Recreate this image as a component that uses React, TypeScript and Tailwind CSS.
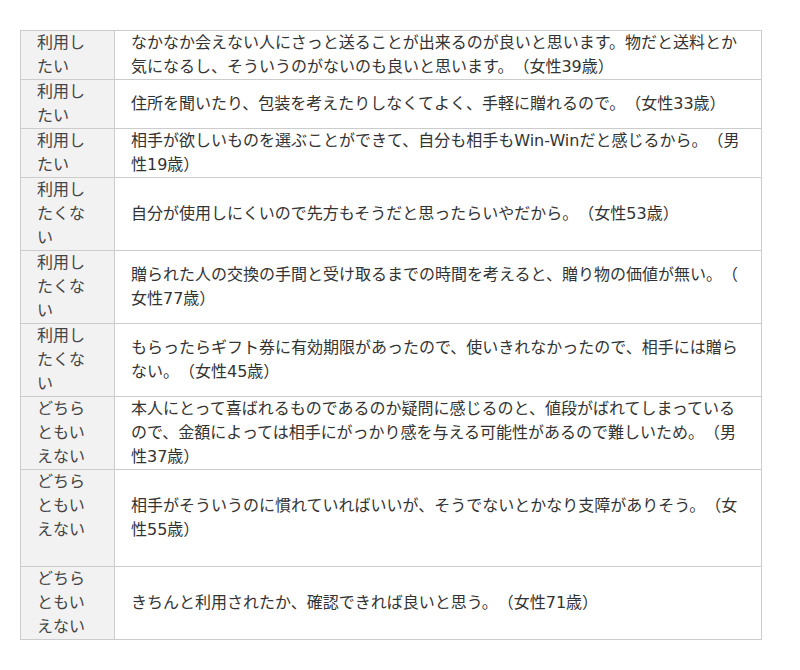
import React from 'react';

type Row = { label: string; text: string; tall?: boolean };

const rows: Row[] = [
  { label: '利用したい', text: 'なかなか会えない人にさっと送ることが出来るのが良いと思います。物だと送料とか気になるし、そういうのがないのも良いと思います。（女性39歳）' },
  { label: '利用したい', text: '住所を聞いたり、包装を考えたりしなくてよく、手軽に贈れるので。（女性33歳）' },
  { label: '利用したい', text: '相手が欲しいものを選ぶことができて、自分も相手もWin-Winだと感じるから。（男性19歳）' },
  { label: '利用したくない', text: '自分が使用しにくいので先方もそうだと思ったらいやだから。（女性53歳）' },
  { label: '利用したくない', text: '贈られた人の交換の手間と受け取るまでの時間を考えると、贈り物の価値が無い。（女性77歳）' },
  { label: '利用したくない', text: 'もらったらギフト券に有効期限があったので、使いきれなかったので、相手には贈らない。（女性45歳）' },
  { label: 'どちらともいえない', text: '本人にとって喜ばれるものであるのか疑問に感じるのと、値段がばれてしまっているので、金額によっては相手にがっかり感を与える可能性があるので難しいため。（男性37歳）' },
  { label: 'どちらともいえない', text: '相手がそういうのに慣れていればいいが、そうでないとかなり支障がありそう。（女性55歳）', tall: true },
  { label: 'どちらともいえない', text: 'きちんと利用されたか、確認できれば良いと思う。（女性71歳）' },
];

export default function App() {
  return (
    <div className="min-h-[670px] bg-white pt-[30px] pl-5 font-['DejaVu_Sans','Noto_Sans_CJK_JP',sans-serif] text-[16px] leading-[24px] text-[#333] [text-spacing-trim:space-all] [line-break:anywhere]">
      <table className="w-[742px] border-collapse">
        <tbody>
          {rows.map((r, i) => (
            <tr key={i}>
              <td
                className={`w-[94px] border border-[#ccc] bg-[#f2f2f2] pl-4 pr-4 align-top text-[#444] ${r.tall ? 'h-[97px]' : ''}`}
              >
                {r.label}
              </td>
              <td className="border border-[#ccc] px-4 align-middle">{r.text}</td>
            </tr>
          ))}
        </tbody>
      </table>
    </div>
  );
}
